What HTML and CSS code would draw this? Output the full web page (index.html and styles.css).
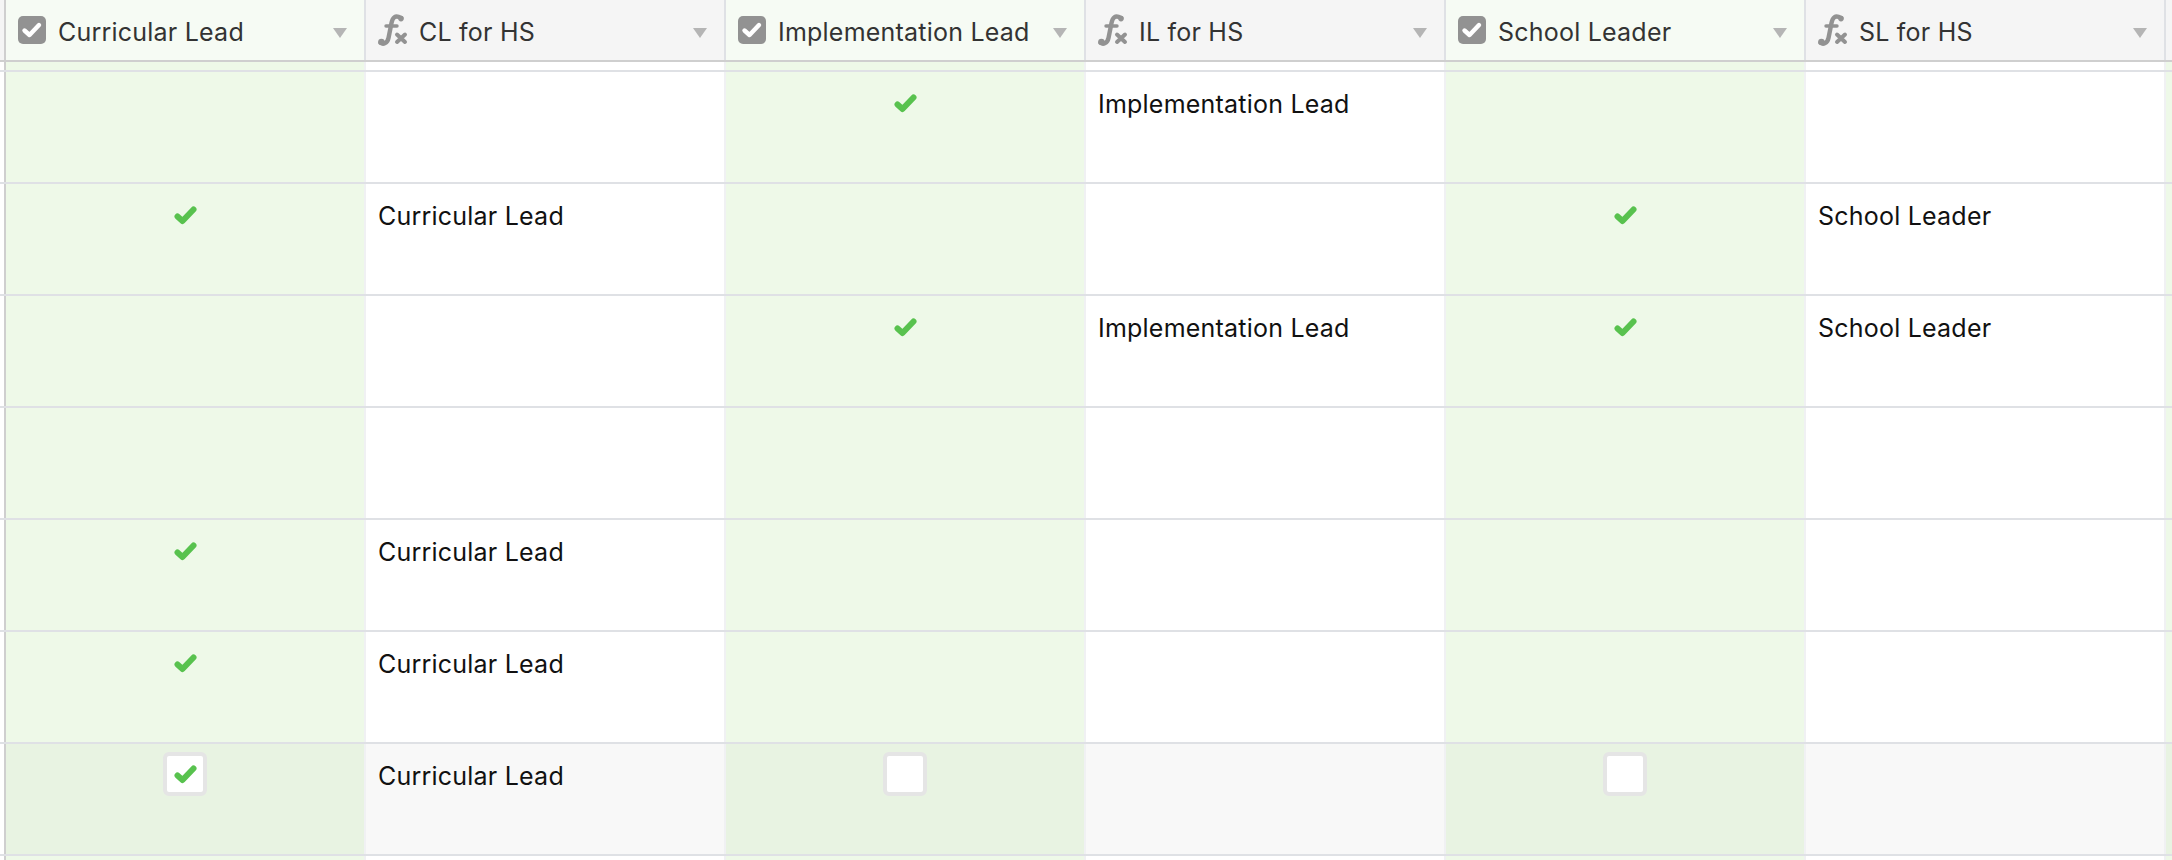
FILE: index.html
```html
<!DOCTYPE html>
<html lang="en">
<head>
    <meta charset="UTF-8">
    <title>Grid</title>
    <link rel="stylesheet" href="styles.css">
</head>
<body>
    <svg class="sprites" aria-hidden="true">
        <symbol id="icon-check" viewBox="0 0 23 19">
            <path d="M3.500 10.500 L8.500 15 L19.500 3.500" fill="none" stroke="currentColor" stroke-width="6" stroke-linecap="round" stroke-linejoin="round"/>
        </symbol>
        <symbol id="icon-checkbox" viewBox="0 0 28 28">
            <rect width="28" height="28" rx="5" fill="#929292"/>
            <path d="M6.500 14.500 L11.500 19 L21 9" fill="none" stroke="#fff" stroke-width="4.400" stroke-linecap="round" stroke-linejoin="round"/>
        </symbol>
        <symbol id="icon-formula" viewBox="0 0 30 32">
            <path d="M23 4 C17 0.500 14.500 4 13.500 9 L10.500 24 C9.500 29 5 31 2.500 28.500" fill="none" stroke="#929292" stroke-width="4.400" stroke-linecap="round"/>
            <circle cx="3.400" cy="28" r="3.200" fill="#929292"/>
            <circle cx="23" cy="4.600" r="2.800" fill="#929292"/>
            <path d="M8 12 H19" fill="none" stroke="#929292" stroke-width="3.400" stroke-linecap="round"/>
            <path d="M19 20.500 L27 28 M27 20.500 L19 28" fill="none" stroke="#929292" stroke-width="4" stroke-linecap="round"/>
        </symbol>
    </svg>

    <div class="table">
        <div class="row head">
            <div class="gutter"></div>
            <div class="cell tinted"><svg class="type-check"><use href="#icon-checkbox"/></svg><span class="title">Curricular Lead</span><i class="caret"></i></div>
            <div class="cell"><svg class="type-fx"><use href="#icon-formula"/></svg><span class="title">CL for HS</span><i class="caret"></i></div>
            <div class="cell tinted"><svg class="type-check"><use href="#icon-checkbox"/></svg><span class="title">Implementation Lead</span><i class="caret"></i></div>
            <div class="cell"><svg class="type-fx"><use href="#icon-formula"/></svg><span class="title">IL for HS</span><i class="caret"></i></div>
            <div class="cell tinted"><svg class="type-check"><use href="#icon-checkbox"/></svg><span class="title">School Leader</span><i class="caret"></i></div>
            <div class="cell"><svg class="type-fx"><use href="#icon-formula"/></svg><span class="title">SL for HS</span><i class="caret"></i></div>
            <div class="cell tail"></div>
        </div>

        <div class="row spacer">
            <div class="gutter"></div>
            <div class="cell green"></div>
            <div class="cell"></div>
            <div class="cell green"></div>
            <div class="cell"></div>
            <div class="cell green"></div>
            <div class="cell"></div>
            <div class="cell green tail"></div>
        </div>

        <div class="row">
            <div class="gutter"></div>
            <div class="cell green"></div>
            <div class="cell"></div>
            <div class="cell green"><svg class="check"><use href="#icon-check"/></svg></div>
            <div class="cell">Implementation Lead</div>
            <div class="cell green"></div>
            <div class="cell"></div>
            <div class="cell green tail"></div>
        </div>
        <div class="row">
            <div class="gutter"></div>
            <div class="cell green"><svg class="check"><use href="#icon-check"/></svg></div>
            <div class="cell">Curricular Lead</div>
            <div class="cell green"></div>
            <div class="cell"></div>
            <div class="cell green"><svg class="check"><use href="#icon-check"/></svg></div>
            <div class="cell">School Leader</div>
            <div class="cell green tail"></div>
        </div>
        <div class="row">
            <div class="gutter"></div>
            <div class="cell green"></div>
            <div class="cell"></div>
            <div class="cell green"><svg class="check"><use href="#icon-check"/></svg></div>
            <div class="cell">Implementation Lead</div>
            <div class="cell green"><svg class="check"><use href="#icon-check"/></svg></div>
            <div class="cell">School Leader</div>
            <div class="cell green tail"></div>
        </div>
        <div class="row">
            <div class="gutter"></div>
            <div class="cell green"></div>
            <div class="cell"></div>
            <div class="cell green"></div>
            <div class="cell"></div>
            <div class="cell green"></div>
            <div class="cell"></div>
            <div class="cell green tail"></div>
        </div>
        <div class="row">
            <div class="gutter"></div>
            <div class="cell green"><svg class="check"><use href="#icon-check"/></svg></div>
            <div class="cell">Curricular Lead</div>
            <div class="cell green"></div>
            <div class="cell"></div>
            <div class="cell green"></div>
            <div class="cell"></div>
            <div class="cell green tail"></div>
        </div>
        <div class="row">
            <div class="gutter"></div>
            <div class="cell green"><svg class="check"><use href="#icon-check"/></svg></div>
            <div class="cell">Curricular Lead</div>
            <div class="cell green"></div>
            <div class="cell"></div>
            <div class="cell green"></div>
            <div class="cell"></div>
            <div class="cell green tail"></div>
        </div>
        <div class="row hover">
            <div class="gutter"></div>
            <div class="cell green"><span class="box"><svg class="check"><use href="#icon-check"/></svg></span></div>
            <div class="cell">Curricular Lead</div>
            <div class="cell green"><span class="box"></span></div>
            <div class="cell"></div>
            <div class="cell green"><span class="box"></span></div>
            <div class="cell"></div>
            <div class="cell green tail"></div>
        </div>
        <div class="row last">
            <div class="gutter"></div>
            <div class="cell green"></div>
            <div class="cell"></div>
            <div class="cell green"></div>
            <div class="cell"></div>
            <div class="cell green"></div>
            <div class="cell"></div>
            <div class="cell green tail"></div>
        </div>
    </div>
</body>
</html>
```

FILE: styles.css
```css
html, body {
    margin: 0;
    padding: 0;
    height: 860px;
    overflow: hidden;
    background: #fff;
}
body {
    font-family: Inter, "Liberation Sans", sans-serif;
    font-size: 25px;
    letter-spacing: 0.22px;
    color: #111;
}
.sprites {
    display: none;
}
.row {
    display: flex;
    height: 112px;
    box-sizing: border-box;
    border-bottom: 2px solid #dfe1e5;
}
.gutter {
    flex: none;
    width: 4px;
    border-right: 2px solid #cfcfcf;
}
.cell {
    flex: none;
    width: 360px;
    box-sizing: border-box;
    padding: 16px 12px;
    line-height: 32px;
    border-right: 2px solid #f0f1f3;
}
.cell.green {
    background: #eef9e8;
    display: flex;
    justify-content: center;
}
.cell.tail {
    flex: 1;
    width: auto;
    padding: 0;
    border-right: 0;
}
.check {
    width: 23px;
    height: 19px;
    margin-top: 6px;
    color: #58c24e;
}

/* header */
.head {
    height: 62px;
    border-bottom-color: #cfcfcf;
    color: #333;
}
.head .gutter {
    background: #f5f5f5;
}
.head .cell {
    display: flex;
    align-items: center;
    height: 60px;
    padding: 0 17px 0 12px;
    background: #f5f5f5;
    border-right-color: #dfe1e5;
}
.head .cell.tinted {
    background: #f6fbf4;
}
.head .cell.tail {
    padding: 0;
    background: #f5f5f5;
    border-right: 0;
}
.type-check {
    flex: none;
    width: 28px;
    height: 28px;
    margin-right: 12px;
}
.type-fx {
    flex: none;
    width: 30px;
    height: 32px;
    margin-right: 11px;
}
.title {
    flex: 1;
    white-space: nowrap;
    padding-top: 3px;
}
.caret {
    flex: none;
    width: 0;
    height: 0;
    margin-top: 5px;
    border-left: 7px solid transparent;
    border-right: 7px solid transparent;
    border-top: 10px solid #b5b5b5;
}

.spacer {
    height: 10px;
}
.spacer .cell {
    padding: 0;
    line-height: 0;
}
.last {
    height: 4px;
    border-bottom: 0;
}
.last .cell {
    padding: 0;
}

/* hovered row */
.hover .cell {
    background: #f8f8f8;
}
.hover .cell.green {
    background: #e8f3e2;
}
.box {
    display: flex;
    align-items: center;
    justify-content: center;
    width: 44px;
    height: 44px;
    margin-top: -8px;
    box-sizing: border-box;
    background: #fff;
    border: 4px solid #e5e5e5;
    border-radius: 6px;
}
.box .check {
    margin-top: 0;
}
```
